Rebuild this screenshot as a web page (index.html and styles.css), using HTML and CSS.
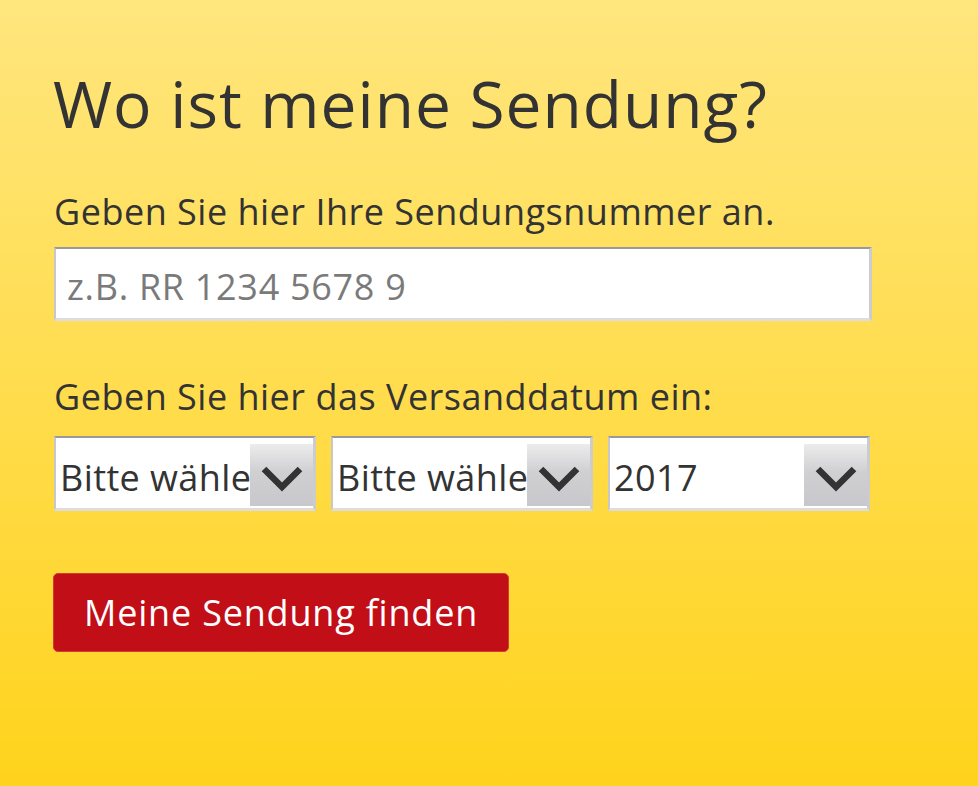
FILE: index.html
```html
<!DOCTYPE html>
<html lang="de">
<head>
    <meta charset="UTF-8">
    <meta name="viewport" content="width=device-width, initial-scale=1.0">
    <title>Sendungsverfolgung</title>
    <link rel="stylesheet" href="styles.css">
</head>
<body>

<div class="tracking">
    <h1>Wo ist meine Sendung?</h1>

    <div class="form-group">
        <label for="nummer">Geben Sie hier Ihre Sendungsnummer an.</label>
        <input type="text" id="nummer" placeholder="z.B. RR 1234 5678 9">
    </div>

    <div class="form-group date-group">
        <label for="tag">Geben Sie hier das Versanddatum ein:</label>
        <div class="select-row">
            <div class="select-box">
                <select id="tag">
                    <option>Bitte wählen</option>
                </select>
                <span class="arrow"><svg viewBox="0 0 42 26" width="42" height="26"><path d="M3 3 L21 21 L39 3" fill="none" stroke="#333" stroke-width="6.5"/></svg></span>
            </div>
            <div class="select-box">
                <select id="monat">
                    <option>Bitte wählen</option>
                </select>
                <span class="arrow"><svg viewBox="0 0 42 26" width="42" height="26"><path d="M3 3 L21 21 L39 3" fill="none" stroke="#333" stroke-width="6.5"/></svg></span>
            </div>
            <div class="select-box">
                <select id="jahr">
                    <option>2017</option>
                </select>
                <span class="arrow"><svg viewBox="0 0 42 26" width="42" height="26"><path d="M3 3 L21 21 L39 3" fill="none" stroke="#333" stroke-width="6.5"/></svg></span>
            </div>
        </div>
    </div>

    <button class="find-button">Meine Sendung finden</button>
</div>

</body>
</html>
```

FILE: styles.css
```css
html, body {
    height: 100%;
}
body {
    margin: 0;
    font-family: "Open Sans", "Noto Sans", sans-serif;
    color: #333;
    background: linear-gradient(to bottom, #ffe67e 0%, #ffd31c 100%);
}
.tracking {
    padding: 65px 0 0 54px;
    width: 818px;
}
h1 {
    font-size: 64px;
    font-weight: 400;
    letter-spacing: 1px;
    margin: 0 0 49px -1px;
    line-height: 78px;
}
.form-group {
    margin-bottom: 56px;
}
.form-group label {
    display: block;
    font-size: 36px;
    letter-spacing: 0.5px;
    line-height: 40px;
    margin-bottom: 15px;
}
.form-group input {
    display: block;
    width: 100%;
    height: 74px;
    box-sizing: border-box;
    padding: 5px 11px 0 11px;
    font-family: inherit;
    font-size: 36px;
    letter-spacing: 0.7px;
    color: #333;
    background: #fff;
    border-style: solid;
    border-width: 2px 3px 3px 2px;
    border-color: #999 #ccc #ddd #c8c8c8;
    outline: none;
}
.form-group input::placeholder {
    color: #7a7a7a;
}
.date-group {
    margin-bottom: 62px;
}
.date-group label {
    margin-bottom: 19px;
}
.select-row {
    display: flex;
    gap: 15px;
}
.select-box {
    position: relative;
    width: 262px;
    height: 75px;
}
.select-box select {
    appearance: none;
    -webkit-appearance: none;
    width: 100%;
    height: 100%;
    box-sizing: border-box;
    padding: 9px 63px 0 4px;
    font-family: inherit;
    font-size: 36px;
    letter-spacing: 0.4px;
    color: #333;
    background: #fff;
    border-style: solid;
    border-width: 2px 3px 3px 2px;
    border-color: #999 #ccc #ddd #c8c8c8;
    border-radius: 0;
    outline: none;
}
.select-box .arrow {
    position: absolute;
    top: 8px;
    right: 3px;
    width: 63px;
    height: 62px;
    display: flex;
    align-items: center;
    justify-content: center;
    background: linear-gradient(to bottom, #ececec 0%, #d0d0d3 45%, #c8c8cc 100%);
    pointer-events: none;
}
.select-box .arrow svg {
    margin-top: 8px;
}
.find-button {
    height: 79px;
    padding: 0 30px;
    font-family: inherit;
    font-size: 36px;
    letter-spacing: 0.8px;
    color: #fff;
    background-color: #c20e17;
    border: 1px solid #d43a3a;
    border-radius: 5px;
    margin-left: -1px;
    cursor: pointer;
}
.find-button:hover {
    background-color: #a80b12;
}
```
